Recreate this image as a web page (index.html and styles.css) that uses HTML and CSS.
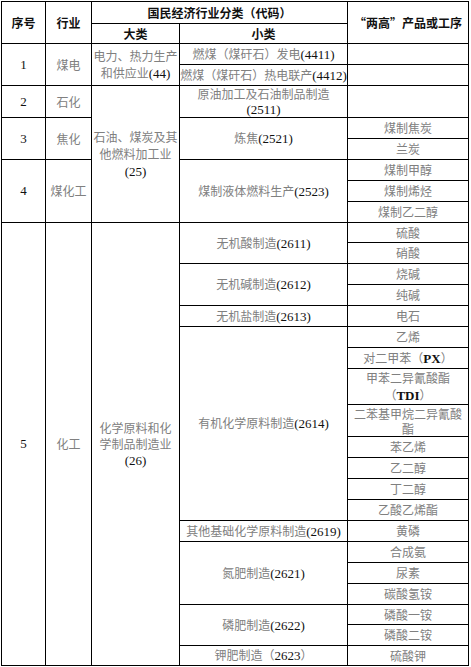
FILE: index.html
```html
<!DOCTYPE html>
<html lang="zh-CN">
<head>
<meta charset="utf-8">
<title>两高行业分类</title>
<link rel="stylesheet" href="styles.css">
</head>
<body>
<div class="sheet">
  <div class="cell k1 rs2 hd"><p>序号</p></div>
  <div class="cell k2 rs2 hd"><p>行业</p></div>
  <div class="cell k3 cs2 hd"><p>国民经济行业分类（代码）</p></div>
  <div class="cell k5 rs2 hd"><p>“两高”产品或工序</p></div>
  <div class="cell k3 hd"><p>大类</p></div>
  <div class="cell k4 hd"><p>小类</p></div>

  <div class="cell k1 rs2 num"><p>1</p></div>
  <div class="cell k2 rs2"><p>煤电</p></div>
  <div class="cell k3 rs2"><p class="loose">电力、热力生产<br>和供应业<span class="n">(44)</span></p></div>
  <div class="cell k4"><p>燃煤（煤矸石）发电<span class="n">(4411)</span></p></div>
  <div class="cell k5"></div>
  <div class="cell k4"><p>燃煤（煤矸石）热电联产<span class="n">(4412)</span></p></div>
  <div class="cell k5"></div>

  <div class="cell k1 num"><p>2</p></div>
  <div class="cell k2"><p>石化</p></div>
  <div class="cell k3 rs6"><p class="loose">石油、煤炭及其<br>他燃料加工业<br><span class="n">(25)</span></p></div>
  <div class="cell k4"><p class="tight">原油加工及石油制品制造<br><span class="n">(2511)</span></p></div>
  <div class="cell k5"></div>

  <div class="cell k1 rs2 num"><p>3</p></div>
  <div class="cell k2 rs2"><p>焦化</p></div>
  <div class="cell k4 rs2"><p>炼焦<span class="n">(2521)</span></p></div>
  <div class="cell k5"><p>煤制焦炭</p></div>
  <div class="cell k5"><p>兰炭</p></div>

  <div class="cell k1 rs3 num"><p>4</p></div>
  <div class="cell k2 rs3"><p>煤化工</p></div>
  <div class="cell k4 rs3"><p>煤制液体燃料生产<span class="n">(2523)</span></p></div>
  <div class="cell k5"><p>煤制甲醇</p></div>
  <div class="cell k5"><p>煤制烯烃</p></div>
  <div class="cell k5"><p>煤制乙二醇</p></div>

  <div class="cell k1 rs20 num"><p>5</p></div>
  <div class="cell k2 rs20"><p>化工</p></div>
  <div class="cell k3 rs20"><p>化学原料和化<br>学制品制造业<br><span class="n">(26)</span></p></div>
  <div class="cell k4 rs2"><p>无机酸制造<span class="n">(2611)</span></p></div>
  <div class="cell k5"><p>硫酸</p></div>
  <div class="cell k5"><p>硝酸</p></div>
  <div class="cell k4 rs2"><p>无机碱制造<span class="n">(2612)</span></p></div>
  <div class="cell k5"><p>烧碱</p></div>
  <div class="cell k5"><p>纯碱</p></div>
  <div class="cell k4"><p>无机盐制造<span class="n">(2613)</span></p></div>
  <div class="cell k5"><p>电石</p></div>
  <div class="cell k4 rs8"><p>有机化学原料制造<span class="n">(2614)</span></p></div>
  <div class="cell k5"><p>乙烯</p></div>
  <div class="cell k5"><p>对二甲苯（<span class="n b">PX</span>）</p></div>
  <div class="cell k5"><p class="loose">甲苯二异氰酸酯<br>（<span class="n b">TDI</span>）</p></div>
  <div class="cell k5"><p class="tight">二苯基甲烷二异氰酸<br>酯</p></div>
  <div class="cell k5"><p>苯乙烯</p></div>
  <div class="cell k5"><p>乙二醇</p></div>
  <div class="cell k5"><p>丁二醇</p></div>
  <div class="cell k5"><p>乙酸乙烯酯</p></div>
  <div class="cell k4"><p>其他基础化学原料制造<span class="n">(2619)</span></p></div>
  <div class="cell k5"><p>黄磷</p></div>
  <div class="cell k4 rs3"><p>氮肥制造<span class="n">(2621)</span></p></div>
  <div class="cell k5"><p>合成氨</p></div>
  <div class="cell k5"><p>尿素</p></div>
  <div class="cell k5"><p>碳酸氢铵</p></div>
  <div class="cell k4 rs2"><p>磷肥制造<span class="n">(2622)</span></p></div>
  <div class="cell k5"><p>磷酸一铵</p></div>
  <div class="cell k5"><p>磷酸二铵</p></div>
  <div class="cell k4"><p>钾肥制造（<span class="n">2623</span>）</p></div>
  <div class="cell k5"><p>硫酸钾</p></div>
</div>
</body>
</html>
```
FILE: styles.css
```css
html, body {
  margin: 0;
  padding: 0;
  background: #fff;
}

.sheet {
  display: grid;
  width: max-content;
  margin: 1px 0 0 1px;
  padding: 1px;
  gap: 1px;
  background: #000;
  grid-template-columns: 43px 45px 87px 167px 120px;
  grid-template-rows:
    21px 19px
    20px 20px
    31px
    20px 20px 20px 20px 20px
    19px
    20px 20px 20px 20px 20px 20px
    35px 31px
    20px 20px 20px 20px 20px 20px 20px 20px
    19px 20px 19px;
  font-family: "Noto Sans CJK SC", "Noto Sans CJK JP", sans-serif;
  font-size: 12px;
  color: #808080;
}

.cell {
  background: #fff;
  display: flex;
  align-items: center;
  justify-content: center;
  overflow: hidden;
}

.cell p {
  margin: 0;
  text-align: center;
  line-height: 16px;
  white-space: nowrap;
}

.cell p.tight {
  line-height: 15px;
}

.cell p.loose {
  line-height: 17px;
}

.k1 { grid-column: 1; }
.k2 { grid-column: 2; }
.k3 { grid-column: 3; }
.k4 { grid-column: 4; }
.k5 { grid-column: 5; }
.cs2 { grid-column: 3 / span 2; }

.rs2 { grid-row: span 2; }
.rs3 { grid-row: span 3; }
.rs6 { grid-row: span 6; }
.rs8 { grid-row: span 8; }
.rs20 { grid-row: span 20; }

.hd {
  color: #111;
  font-weight: 700;
}

.num {
  font-family: "Liberation Serif", serif;
  font-size: 13px;
  color: #111;
}

.n {
  font-family: "Liberation Serif", serif;
  font-size: 13px;
  color: #111;
}

.b {
  font-weight: 700;
}
```
